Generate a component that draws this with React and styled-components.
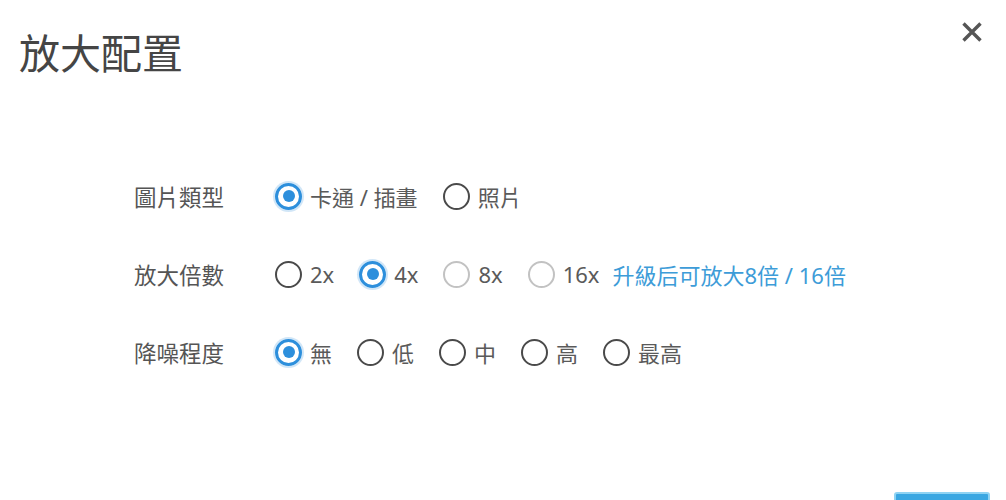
import React, { useState } from "react";
import styled, { createGlobalStyle, css } from "styled-components";

const Global = createGlobalStyle`
  html, body { margin: 0; padding: 0; background: #fff; }
  body { font-family: "Noto Sans", "Noto Sans CJK TC", sans-serif; }
`;

const Dialog = styled.div`
  width: 1006px;
  height: 500px;
  overflow: hidden;
  background: #fff;
  display: flex;
  flex-direction: column;
  font-family: "Noto Sans", "Noto Sans CJK TC", sans-serif;
`;

const Header = styled.div`
  display: flex;
  justify-content: space-between;
  align-items: flex-start;
  padding: 31px 20px 0 19px;
  flex-shrink: 0;
`;

const Title = styled.h1`
  margin: 0;
  font-family: "Noto Sans CJK TC", sans-serif;
  font-weight: 400;
  font-size: 41px;
  line-height: 40px;
  color: #454545;
`;

const Close = styled.button`
  margin-top: -13px;
  width: 28px;
  height: 28px;
  padding: 0;
  border: none;
  background: none;
  display: flex;
  align-items: center;
  justify-content: center;
  cursor: pointer;
`;

const Form = styled.div`
  display: flex;
  flex-direction: column;
  gap: 38px;
  padding-left: 134px;
  margin-top: 105px;
  flex-shrink: 0;
`;

const Row = styled.div`
  display: flex;
  align-items: center;
  height: 40px;
`;

const Label = styled.div`
  width: 141px;
  font-family: "Noto Sans CJK TC", sans-serif;
  font-size: 22.5px;
  color: #555;
`;

const Options = styled.div`
  display: flex;
  align-items: center;
  gap: 25px;
`;

const Option = styled.label`
  display: flex;
  align-items: center;
  gap: 8px;
  cursor: ${(p) => (p.$disabled ? "default" : "pointer")};
  font-family: "Noto Sans", "Noto Sans CJK TC", sans-serif;
  font-size: 22px;
  color: #5a5a5a;
`;

const Circle = styled.span`
  box-sizing: border-box;
  width: 27px;
  height: 27px;
  border-radius: 50%;
  border: 2.5px solid #4a4a4a;
  display: flex;
  align-items: center;
  justify-content: center;
  flex-shrink: 0;
  ${(p) =>
    p.$disabled &&
    css`
      border-color: #c2c2c2;
    `}
  ${(p) =>
    p.$checked &&
    css`
      border: 3px solid #2d8fdc;
      box-shadow: 0 0 0 2px rgba(45, 143, 220, 0.22);
      &::after {
        content: "";
        width: 12px;
        height: 12px;
        border-radius: 50%;
        background: #2d8fdc;
      }
    `}
`;

const Link = styled.a`
  margin-left: -12px;
  font-family: "Noto Sans", "Noto Sans CJK TC", sans-serif;
  font-size: 22px;
  color: #3d9cd8;
  text-decoration: none;
  cursor: pointer;
`;

const Footer = styled.div`
  display: flex;
  justify-content: flex-end;
  padding-right: 16px;
  margin-top: 120px;
  flex-shrink: 0;
`;

const Button = styled.button`
  width: 96px;
  height: 40px;
  border: 2px solid #8fd3f3;
  border-radius: 3px;
  background: #3aa7e2;
  color: #fff;
`;

function Radio({ checked, disabled, onSelect, children }) {
  return (
    <Option $disabled={disabled} onClick={() => !disabled && onSelect()}>
      <Circle $checked={checked} $disabled={disabled} />
      <span>{children}</span>
    </Option>
  );
}

const groups = [
  { key: "type", label: "圖片類型", options: [{ v: "卡通 / 插畫" }, { v: "照片" }] },
  {
    key: "scale",
    label: "放大倍數",
    options: [{ v: "2x" }, { v: "4x" }, { v: "8x", d: true }, { v: "16x", d: true }],
    link: "升級后可放大8倍 / 16倍",
  },
  {
    key: "noise",
    label: "降噪程度",
    options: [{ v: "無" }, { v: "低" }, { v: "中" }, { v: "高" }, { v: "最高" }],
  },
];

export default function App() {
  const [sel, setSel] = useState({ type: "卡通 / 插畫", scale: "4x", noise: "無" });
  return (
    <Dialog>
      <Global />
      <Header>
        <Title>放大配置</Title>
        <Close aria-label="close">
          <svg width="22" height="22" viewBox="0 0 22 22">
            <path d="M2.5 2.5 L19.5 19.5 M19.5 2.5 L2.5 19.5" stroke="#555" strokeWidth="3.4" strokeLinecap="butt" />
          </svg>
        </Close>
      </Header>
      <Form>
        {groups.map((g) => (
          <Row key={g.key}>
            <Label>{g.label}</Label>
            <Options>
              {g.options.map((o) => (
                <Radio
                  key={o.v}
                  checked={sel[g.key] === o.v}
                  disabled={o.d}
                  onSelect={() => setSel({ ...sel, [g.key]: o.v })}
                >
                  {o.v}
                </Radio>
              ))}
              {g.link && <Link>{g.link}</Link>}
            </Options>
          </Row>
        ))}
      </Form>
      <Footer>
        <Button aria-label="開始" />
      </Footer>
    </Dialog>
  );
}
